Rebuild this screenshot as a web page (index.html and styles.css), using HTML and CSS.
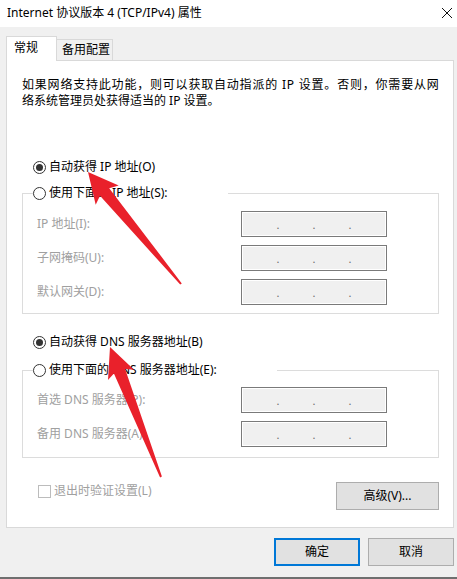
FILE: index.html
```html
<!DOCTYPE html>
<html lang="zh-CN">
<head>
<meta charset="utf-8">
<title>Internet 协议版本 4 (TCP/IPv4) 属性</title>
<link rel="stylesheet" href="styles.css">
</head>
<body>
<div class="window">
  <div class="titlebar">
    <span class="title">Internet 协议版本 4 (TCP/IPv4) 属性</span>
    <svg class="close" width="12" height="12" viewBox="0 0 12 12"><path d="M1 1 L11 11 M11 1 L1 11" stroke="#111" stroke-width="1" fill="none"/></svg>
  </div>
  <div class="body">
    <div class="tabs">
      <div class="tab active">常规</div>
      <div class="tab">备用配置</div>
    </div>
    <div class="panel">
      <p class="desc"><span class="desc-wide">如果网络支持此功能，则可以获取自动指派的 IP 设置。否则，你需要从网</span><br>络系统管理员处获得适当的 IP 设置。</p>

      <div class="radio-row auto-ip"><span class="radio checked"></span><span>自动获得 IP 地址(O)</span></div>

      <fieldset class="group group-ip">
        <legend><span class="radio"></span><span>使用下面的 IP 地址(S):</span></legend>
        <div class="field"><span class="label">IP 地址(I):</span><div class="ipbox"><span></span><i>.</i><span></span><i>.</i><span></span><i>.</i><span></span></div></div>
        <div class="field"><span class="label">子网掩码(U):</span><div class="ipbox"><span></span><i>.</i><span></span><i>.</i><span></span><i>.</i><span></span></div></div>
        <div class="field"><span class="label">默认网关(D):</span><div class="ipbox"><span></span><i>.</i><span></span><i>.</i><span></span><i>.</i><span></span></div></div>
      </fieldset>

      <div class="radio-row auto-dns"><span class="radio checked"></span><span>自动获得 DNS 服务器地址(B)</span></div>

      <fieldset class="group group-dns">
        <legend><span class="radio"></span><span>使用下面的 DNS 服务器地址(E):</span></legend>
        <div class="field"><span class="label">首选 DNS 服务器(P):</span><div class="ipbox"><span></span><i>.</i><span></span><i>.</i><span></span><i>.</i><span></span></div></div>
        <div class="field"><span class="label">备用 DNS 服务器(A):</span><div class="ipbox"><span></span><i>.</i><span></span><i>.</i><span></span><i>.</i><span></span></div></div>
      </fieldset>

      <div class="footer-row">
        <label class="check"><span class="box"></span><span>退出时验证设置(L)</span></label>
        <button class="btn adv">高级(V)...</button>
      </div>
    </div>
    <div class="actions">
      <button class="btn primary">确定</button>
      <button class="btn">取消</button>
    </div>
  </div>
  <svg class="arrows" width="457" height="579" viewBox="0 0 457 579">
    <polygon fill="#e9212b" points="88,172 118.7,185.5 109.2,188.2 181.8,283.4 180.2,284.6 100,195.8 95.7,204.7"/>
    <polygon fill="#e9212b" points="110,347 134,369.8 125.1,369 161.9,476.6 160.1,477.4 113.9,373.4 108,380"/>
  </svg>
</div>
</body>
</html>
```
FILE: styles.css
```css
* { box-sizing: border-box; }
html, body { margin: 0; padding: 0; }
body {
  width: 457px;
  height: 579px;
  overflow: hidden;
  font-family: "Segoe UI", "Noto Sans", "Noto Sans CJK SC", sans-serif;
  font-size: 12px;
  color: #000;
  background: #f0f0f0;
}
.window {
  position: relative;
  width: 457px;
  height: 579px;
  background: #f0f0f0;
  border-bottom: 2px solid #6f6f6f;
}
.titlebar {
  height: 27px;
  background: #fff;
  display: flex;
  align-items: center;
  justify-content: space-between;
  padding: 0 4px 2px 7px;
}
.title { line-height: 16px; }
.close { display: block; margin-top: 1px; }

.tabs {
  margin-top: 9px;
  height: 24px;
  padding-left: 6px;
  display: flex;
  align-items: flex-end;
  position: relative;
  z-index: 2;
}
.tab {
  line-height: 16px;
  border: 1px solid #d9d9d9;
  border-bottom: none;
  background: #f0f0f0;
  height: 21px;
  width: 56px;
  padding: 2px 0 0 5px;
  border-left: none;
}
.tab.active {
  background: #fff;
  height: 25px;
  width: 51px;
  margin-bottom: -1px;
  padding: 3px 0 0 7px;
  border-left: 1px solid #d9d9d9;
}
.panel {
  margin-left: 6px;
  width: 448px;
  height: 468px;
  background: #fff;
  border: 1px solid #d9d9d9;
  position: relative;
  z-index: 1;
}
.desc {
  margin: 16px 0 0 15px;
  line-height: 16px;
  white-space: nowrap;
}
.desc-wide { letter-spacing: 0.8px; }
.radio-row, legend {
  display: flex;
  align-items: center;
  gap: 3px;
  line-height: 16px;
  height: 16px;
}
.radio-row { padding-left: 26px; }
.auto-ip { margin-top: 50px; }
.auto-dns { margin-top: 20px; }
.radio {
  width: 13px;
  height: 13px;
  border: 1px solid #333;
  border-radius: 50%;
  background: #fff;
  display: flex;
  align-items: center;
  justify-content: center;
  flex: none;
}
.radio.checked::after {
  content: "";
  width: 7px;
  height: 7px;
  border-radius: 50%;
  background: #333;
}
.group {
  margin: 0 14px 0 15px;
  border: 1px solid #dcdcdc;
  padding: 10px 0 8px 10px;
  min-inline-size: 0;
  display: flex;
  flex-direction: column;
  gap: 8px;
}
.group-ip { margin-top: 10px; }
.group-dns { margin-top: 12px; padding-top: 9px; padding-bottom: 10px; }
legend {
  padding: 0 60px 0 0;
  background: #fff;
}
.field {
  display: flex;
  align-items: center;
  height: 26px;
  padding-left: 4px;
}
.label {
  color: #a0a0a0;
  width: 204px;
  line-height: 16px;
}
.ipbox {
  width: 146px;
  height: 26px;
  border: 1px solid #7a7a7a;
  box-shadow: inset 0 0 0 1px #fff;
  background: #f0f0f0;
  display: grid;
  grid-template-columns: 1fr 0 1fr 0 1fr 0 1fr;
  align-items: center;
}
.ipbox i {
  font-style: normal;
  color: #6d6d6d;
  font-size: 11px;
  line-height: 12px;
  display: flex;
  justify-content: center;
  margin-top: 2px;
}
.footer-row {
  margin: 24px 14px 0 31px;
  display: flex;
  justify-content: space-between;
  align-items: flex-start;
}
.check {
  display: flex;
  align-items: center;
  gap: 3px;
  color: #a0a0a0;
  line-height: 16px;
  margin-top: 1px;
}
.box {
  width: 13px;
  height: 13px;
  border: 1px solid #bcbcbc;
  background: #fff;
}
.btn {
  font: inherit;
  line-height: 16px;
  color: #000;
  background: #e1e1e1;
  border: 1px solid #adadad;
  height: 28px;
  padding: 0;
  margin: 0;
}
.adv { width: 103px; }
.actions {
  display: flex;
  justify-content: flex-end;
  gap: 8px;
  padding: 10px 3px 0 0;
}
.actions .btn { width: 86px; }
.btn.primary {
  border: 2px solid #0078d7;
}
.arrows {
  position: absolute;
  left: 0;
  top: 0;
  pointer-events: none;
  z-index: 5;
}
```
